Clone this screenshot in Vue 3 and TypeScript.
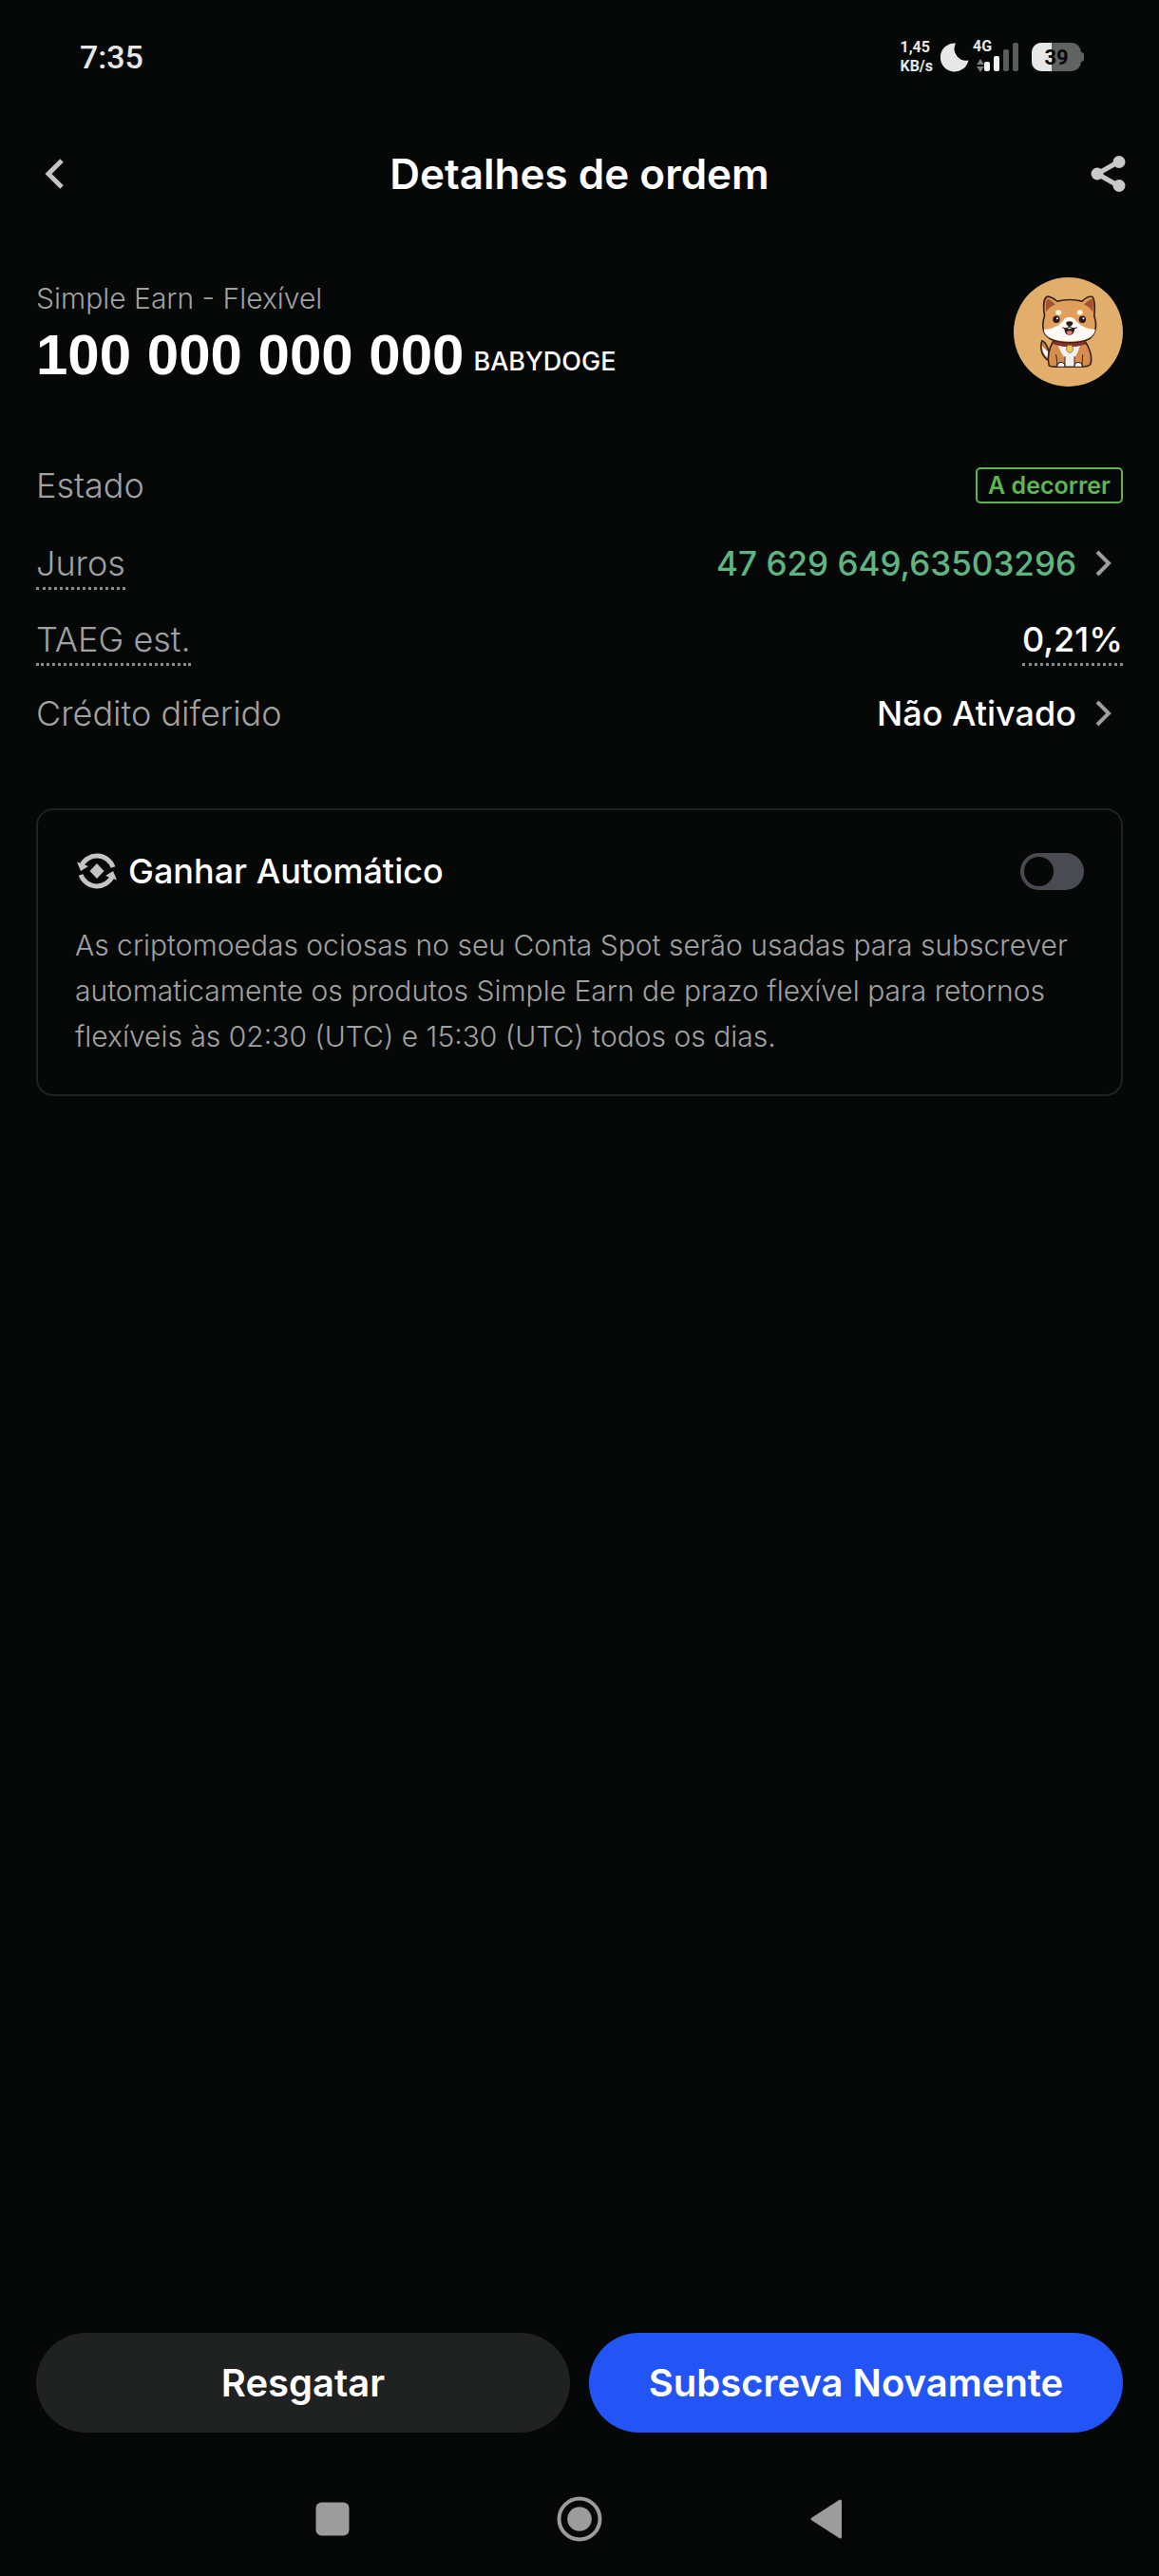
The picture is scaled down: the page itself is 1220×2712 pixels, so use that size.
<script setup lang="ts">
import { ref } from 'vue'

const autoEarn = ref(false)

const signalBars = [
  { x: 12, y: 22, height: 10, active: true },
  { x: 22, y: 16, height: 16, active: true },
  { x: 32, y: 9, height: 23, active: false },
  { x: 42, y: 2, height: 30, active: false },
]
</script>

<template>
  <div class="page">
    <div class="status">
      <span class="clock">7:35</span>
      <div class="indicators">
        <div class="speed"><span>1,45</span><span>KB/s</span></div>
        <svg class="moon" width="30" height="32" viewBox="0 0 30 32">
          <path d="M16 1.500A15 15 0 1 0 29.500 19.500A12.500 12.500 0 0 1 16 1.500Z" fill="#e6e7e7" />
        </svg>
        <svg class="signal" width="54" height="50" viewBox="-4 -8 54 50">
          <text x="0" y="11" font-family="Roboto, sans-serif" font-weight="700" font-size="16" fill="#e6e7e7">4G</text>
          <path d="M8 19l4 6H4zM8 33l4-6H4z" fill="#7b7d7d" />
          <rect
            v-for="bar in signalBars"
            :key="bar.x"
            :x="bar.x"
            :y="bar.y"
            :height="bar.height"
            width="6"
            rx="2"
            :fill="bar.active ? '#f2f3f3' : '#5b5d5d'"
          />
        </svg>
        <svg class="battery" width="55" height="30" viewBox="0 0 55 30">
          <defs>
            <clipPath id="cell"><rect width="52" height="30" rx="10" /></clipPath>
          </defs>
          <g clip-path="url(#cell)">
            <rect width="52" height="30" fill="#616363" />
            <rect width="21" height="30" fill="#e6e7e7" />
          </g>
          <path d="M52 10q3 0 3 3v4q0 3-3 3z" fill="#616363" />
          <text x="26" y="23" text-anchor="middle" font-family="Roboto, sans-serif" font-weight="700" font-size="22" fill="#060807">39</text>
        </svg>
      </div>
    </div>

    <header class="header">
      <button class="icon-button back" type="button" aria-label="Voltar">
        <svg width="36" height="36" viewBox="0 0 36 36" fill="none" stroke="#c4c4c6" stroke-width="5">
          <path d="M31 4L17 18l14 14" />
        </svg>
      </button>
      <h1>Detalhes de ordem</h1>
      <button class="icon-button share" type="button" aria-label="Partilhar">
        <svg width="38" height="40" viewBox="0 0 38 40">
          <path d="M30 7L7 20l23 13" fill="none" stroke="#c9c9cb" stroke-width="5" />
          <g fill="#c9c9cb">
            <circle cx="30" cy="7.500" r="6.500" />
            <circle cx="7" cy="20" r="6.500" />
            <circle cx="30" cy="32.500" r="6.500" />
          </g>
        </svg>
      </button>
    </header>

    <main>
      <section class="hero">
        <div>
          <p class="product">Simple Earn - Flexível</p>
          <p class="amount">100 000 000 000 <span>BABYDOGE</span></p>
        </div>
        <svg class="coin" width="115" height="115" viewBox="53 37 343 343">
          <circle cx="224.500" cy="208.500" r="171.500" fill="#e2ae6c" />
          <g stroke="#3a2418" stroke-width="5" stroke-linejoin="round" stroke-linecap="round">
            <path d="M166 300C142 288 134 262 142 236C160 242 156 262 168 274Z" fill="#c97b42" />
            <path d="M164 292C150 284 142 270 142 252C152 262 160 270 168 280Z" fill="#fff" stroke="none" />
            <path d="M178 236C164 260 158 290 164 314Q170 318 190 318H262Q288 318 294 310C302 286 290 256 276 236Z" fill="#d68c4c" />
            <path d="M192 250Q228 262 262 250Q252 280 244 290V316H214V290Q204 280 192 250Z" fill="#f4efee" stroke="none" />
            <path d="M214 286V316M244 286V316M186 280Q190 300 190 314M270 280Q268 300 268 314" fill="none" stroke-width="3" />
            <path d="M190 318Q190 304 202 304T214 318ZM244 318Q244 304 256 304T268 318Z" fill="#fff" stroke-width="3" />
            <path d="M150 158C144 120 150 100 160 97C172 98 182 106 190 112Q230 102 268 112C278 102 292 96 300 98C310 108 308 134 306 158C316 190 312 214 290 230C262 246 196 246 168 230C140 214 142 184 150 158Z" fill="#e0a05c" />
            <path d="M155 146C152 122 154 108 160 105C170 108 178 116 184 122Q164 130 155 146ZM301 146C304 122 304 108 298 105C288 108 280 116 274 122Q292 130 301 146Z" fill="#a4532f" stroke="none" />
          </g>
          <path d="M148 200C166 202 196 192 214 166Q228 158 242 166C262 192 292 202 309 200C308 212 300 222 288 228C262 241 198 241 170 228C156 222 148 212 148 200Z" fill="#fffaf6" />
          <ellipse cx="194" cy="147" rx="9" ry="8" fill="#fff3e4" />
          <ellipse cx="261" cy="147" rx="9" ry="8" fill="#fff3e4" />
          <g fill="#2a1b18">
            <circle cx="187" cy="169" r="11" />
            <circle cx="269" cy="169" r="11" />
            <path d="M218 178Q228 172 239 178Q240 188 228 192Q217 188 218 178Z" />
            <path d="M212 196Q228 202 245 196Q244 218 228 218T212 196Z" />
          </g>
          <path d="M206 194Q218 202 228 192Q240 202 252 194" fill="none" stroke="#2a1b18" stroke-width="3" />
          <path d="M219 208Q228 202 238 208Q236 217 228 217T219 208Z" fill="#e07f76" />
          <circle cx="190" cy="166" r="3" fill="#fff" />
          <circle cx="272" cy="166" r="3" fill="#fff" />
          <path d="M180 236Q228 252 278 236L278 246Q228 262 180 246Z" fill="#8c2f2c" stroke="#4a1c18" stroke-width="2" />
          <path d="M222 250H236L240 264Q236 274 229 274T218 264Z" fill="#e9c860" stroke="#8a6426" stroke-width="2" />
        </svg>
      </section>

      <dl class="rows">
        <div class="row row-status">
          <dt>Estado</dt>
          <dd><span class="badge">A decorrer</span></dd>
        </div>
        <div class="row row-interest">
          <dt><span class="hint">Juros</span></dt>
          <dd>
            <button class="value-button positive" type="button">
              47 629 649,63503296
              <svg width="20" height="32" viewBox="0 0 20 32" fill="none" stroke="#9d9e9e" stroke-width="4"><path d="M3 4l12 12L3 28" /></svg>
            </button>
          </dd>
        </div>
        <div class="row">
          <dt><span class="hint">TAEG est.</span></dt>
          <dd><span class="hint">0,21%</span></dd>
        </div>
        <div class="row">
          <dt>Crédito diferido</dt>
          <dd>
            <button class="value-button" type="button">
              Não Ativado
              <svg width="20" height="32" viewBox="0 0 20 32" fill="none" stroke="#9d9e9e" stroke-width="4"><path d="M3 4l12 12L3 28" /></svg>
            </button>
          </dd>
        </div>
      </dl>

      <section class="card">
        <div class="card-head">
          <svg width="46" height="44" viewBox="-2 0 46 44">
            <g fill="none" stroke="#c4c4c6" stroke-width="5">
              <path d="M4.500 17A18 18 0 0 1 38 18" />
              <path d="M37.500 27A18 18 0 0 1 4 26" />
            </g>
            <path d="M0 12.500L12 17L4 22ZM42 31.500L30 27L38 22Z" fill="#c4c4c6" />
            <path d="M21 14L28.500 22L21 30L13.500 22Z" fill="#c4c4c6" />
          </svg>
          <label for="auto-earn">Ganhar Automático</label>
          <input id="auto-earn" v-model="autoEarn" type="checkbox" role="switch" />
        </div>
        <p>
          As criptomoedas ociosas no seu Conta Spot serão usadas para subscrever automaticamente os
          produtos Simple Earn de prazo flexível para retornos flexíveis às 02:30 (UTC) e 15:30 (UTC)
          todos os dias.
        </p>
      </section>
    </main>

    <footer>
      <div class="actions">
        <button class="action" type="button">Resgatar</button>
        <button class="action primary" type="button">Subscreva Novamente</button>
      </div>
      <nav class="system-nav">
        <button class="icon-button" type="button" aria-label="Recentes">
          <svg width="48" height="48" viewBox="0 0 48 48"><rect x="6.500" y="6.500" width="35" height="35" rx="6" fill="#9c9c9c" /></svg>
        </button>
        <button class="icon-button" type="button" aria-label="Início">
          <svg width="48" height="48" viewBox="0 0 48 48">
            <circle cx="24" cy="24" r="21.500" fill="none" stroke="#9c9c9c" stroke-width="4" />
            <circle cx="24" cy="24" r="12.800" fill="#9c9c9c" />
          </svg>
        </button>
        <button class="icon-button" type="button" aria-label="Anterior">
          <svg width="48" height="48" viewBox="0 0 48 48">
            <path d="M9 24L38.500 5V43Z" fill="#9c9c9c" stroke="#9c9c9c" stroke-width="3" stroke-linejoin="round" />
          </svg>
        </button>
      </nav>
    </footer>
  </div>
</template>

<style>
body {
  margin: 0;
  background: #060807;
}
</style>

<style scoped>
.page {
  display: flex;
  flex-direction: column;
  min-height: 100vh;
  background: #060807;
  color: #fff;
  font-family: Inter, "Noto Sans", sans-serif;
}

svg {
  display: block;
  flex: none;
}

button {
  margin: 0;
  padding: 0;
  border: 0;
  background: none;
  color: inherit;
  font: inherit;
  cursor: pointer;
}

h1,
p,
dl,
dd {
  margin: 0;
}

.status {
  display: flex;
  align-items: center;
  justify-content: space-between;
  height: 120px;
  padding: 0 79px 0 84px;
  color: #e6e7e7;
  font-family: Roboto, sans-serif;
}

.clock {
  font-size: 34px;
  font-weight: 500;
}

.indicators {
  display: flex;
  align-items: center;
}

.speed {
  display: flex;
  flex-direction: column;
  font-size: 16px;
  font-weight: 700;
  line-height: 20px;
}

.moon {
  margin-left: 8px;
}

.battery {
  margin-left: 12px;
}

.header {
  display: grid;
  grid-template-columns: 60px 1fr 60px;
  align-items: center;
  height: 126px;
  padding: 0 34px;
}

.header h1 {
  font-size: 44px;
  font-weight: 600;
  line-height: 56px;
  text-align: center;
}

.icon-button {
  display: grid;
  place-items: center;
}

.back {
  justify-self: start;
}

.share {
  justify-self: end;
}

main {
  padding: 46px 38px 0;
}

.hero {
  display: flex;
  align-items: center;
  justify-content: space-between;
}

.product {
  color: #a0a1a1;
  font-size: 30px;
  font-weight: 300;
  line-height: 40px;
}

.amount {
  display: flex;
  align-items: flex-end;
  gap: 10px;
  margin-top: 8px;
  font-family: "Liberation Sans", sans-serif;
  font-size: 60px;
  font-weight: 700;
  line-height: 64px;
}

.amount span {
  font-family: Inter, "Noto Sans", sans-serif;
  font-size: 27px;
  font-weight: 500;
  line-height: 50px;
}

.rows {
  display: flex;
  flex-direction: column;
  gap: 28px;
  margin-top: 82px;
  font-size: 36px;
  line-height: 44px;
}

.row {
  display: flex;
  align-items: flex-start;
  justify-content: space-between;
}

.row-status {
  align-items: center;
  margin-bottom: 10px;
}

.row-interest {
  min-height: 52px;
}

dt {
  color: #a0a1a1;
  font-weight: 300;
}

dd {
  font-weight: 500;
}

.hint {
  display: block;
  padding-bottom: 3px;
  border-bottom: 3px dotted #8b8c8c;
}

.badge {
  display: block;
  padding: 0 11px;
  border: 2px solid #5fb54f;
  border-radius: 5px;
  color: #5fb54f;
  font-size: 25px;
  font-weight: 600;
  line-height: 34px;
}

.value-button {
  display: flex;
  align-items: center;
  gap: 19px;
  padding-right: 10px;
}

.positive {
  color: #5fb582;
  font-size: 35px;
}

.card {
  margin-top: 78px;
  padding: 42px 39px 37px;
  border: 2px solid #1f2123;
  border-radius: 18px;
}

.card-head {
  display: flex;
  align-items: center;
}

.card-head label {
  flex: 1;
  margin-left: 10px;
  font-size: 36px;
  font-weight: 500;
  line-height: 44px;
}

.card-head input {
  width: 67px;
  height: 39px;
  margin: 0;
  padding: 4px;
  border-radius: 20px;
  background: #4a4a52;
  appearance: none;
}

.card-head input::before {
  content: "";
  display: block;
  width: 31px;
  height: 31px;
  border-radius: 50%;
  background: #060807;
}

.card-head input:checked::before {
  margin-left: auto;
}

.card p {
  margin-top: 32px;
  color: #a0a1a1;
  font-size: 30px;
  font-weight: 300;
  line-height: 48px;
}

footer {
  margin-top: auto;
}

.actions {
  display: grid;
  grid-template-columns: 1fr 1fr;
  gap: 20px;
  padding: 0 38px;
}

.action {
  height: 105px;
  border-radius: 53px;
  background: #202221;
  font-size: 40px;
  font-weight: 600;
}

.primary {
  background: #2354f5;
}

.system-nav {
  display: grid;
  grid-template-columns: repeat(3, 1fr);
  align-items: center;
  height: 120px;
  margin-top: 31px;
  padding: 0 18%;
}
</style>
